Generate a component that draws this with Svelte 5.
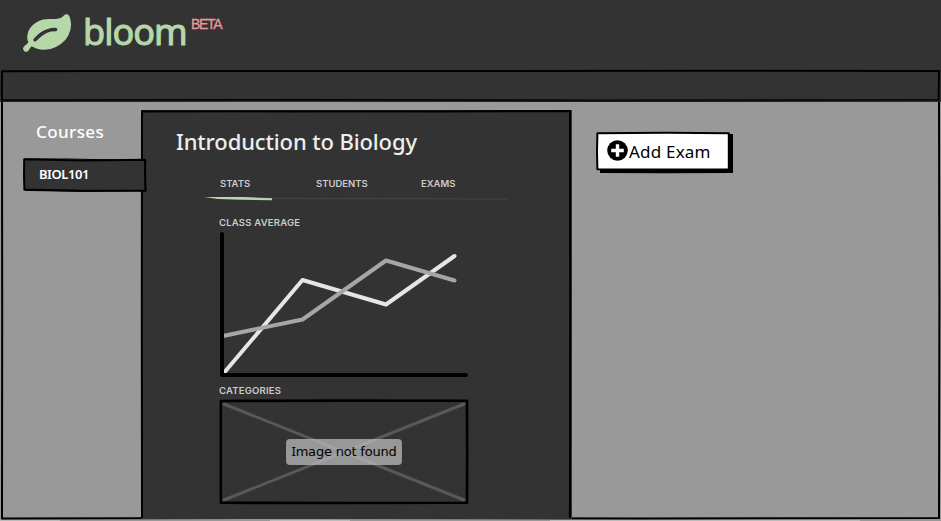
<script>
  const tabs = [
    { label: 'STATS', width: 96 },
    { label: 'STUDENTS', width: 105 },
    { label: 'EXAMS', width: 60 }
  ];
</script>

<div class="app">
  <header>
    <svg class="leaf" viewBox="0 128 1792 1408" aria-hidden="true"><path d="M1280 704q0-26-19-45t-45-19q-172 0-318 49.5t-259.5 134-235.5 219.5q-19 21-19 45 0 26 19 45t45 19q24 0 45-19 27-24 74-71t67-66q137-124 268.5-176t313.5-52q26 0 45-19t19-45zm512-198q0 95-20 193-46 224-184.5 383t-357.5 268q-214 108-438 108-148 0-286-47-15-5-88-42t-96-37q-16 0-39.5 32t-45 70-52.5 70-60 32q-43 0-63.5-17.5t-45.5-59.5q-2-4-6-11t-5.5-10-3-9.5-1.5-13.5q0-35 31-73.5t68-65.5 68-56 31-48q0-4-14-38t-16-44q-9-51-9-104 0-115 43.5-220t119-184.5 170.5-139 204-95.5q55-18 145-25.5t179.5-9 178.5-6 163.5-24 113.5-56.5l29.5-29.5 29.5-28 27-20 36.5-16 43.5-4.5q39 0 70.5 46t47.5 112 24 124 8 96z" /></svg>
    <span class="brand">bloom</span>
    <span class="beta">BETA</span>
  </header>

  <div class="strip">
    <svg class="ink" viewBox="0 0 941 32" preserveAspectRatio="none" aria-hidden="true">
      <path d="M2 1.2L110 1L400 1L700 .8L939 1L938.6 30L600 30.4L300 30L2 30.2L1.8 20Z" />
      <path class="faint" d="M0 31L250 30.6L560 31L941 30.6" />
    </svg>
  </div>

  <div class="workspace">
    <svg class="ink" viewBox="0 0 941 419" preserveAspectRatio="none" aria-hidden="true">
      <path d="M2 0L2.2 210L2 416.4L300 416L640 416.4L939 416L939.4 200L939 0" />
      <path class="lit" d="M0 418.5L60 418.5M270 418.5L350 418.5M550 418.5L860 418.5" />
    </svg>

    <aside>
      <h2>Courses</h2>
      <button class="course">
        <svg class="ink" viewBox="0 0 124 35" preserveAspectRatio="none" aria-hidden="true">
          <path class="fill" d="M1.2 1.2L60 2.4L122 1.8L122.4 32.4L60 32.8L1.4 31.6L1 18Z" />
          <path class="thin" d="M2 1L45 1L123 2.6L121.6 17L123 33L60 33.4L2 32.4" />
        </svg>
        <span>BIOL101</span>
      </button>
    </aside>

    <main>
      <svg class="ink" viewBox="0 0 431 409" preserveAspectRatio="none" aria-hidden="true">
        <path d="M1 408L.8 200L1 1.6L140 1.2L300 1.4L429 1.2L429.2 200L429 408" />
        <path class="thin" d="M1 1L150 1.8L429 .6L429.6 180L428.4 407" />
      </svg>
      <h1>Introduction to Biology</h1>
      <nav>
        {#each tabs as tab}
          <button style="width: {tab.width}px">{tab.label}</button>
        {/each}
      </nav>
      <svg class="rule" width="304" height="6" viewBox="0 0 304 6" aria-hidden="true">
        <path d="M58 .4L220 .8L304 1.6V2.8L190 2.4L65 2.2Z" fill="#404040" />
        <path d="M0 0L40 0L68 1.2V3.2L36 2.8L14 2Z" fill="#b6d7a8" />
      </svg>

      <h3 class="average">CLASS AVERAGE</h3>
      <svg class="chart" width="250" height="148" viewBox="0 0 250 148" aria-hidden="true">
        <path d="M4 143L83.5 49L167 73.5L235.5 25" stroke="#e6e6e6" />
        <path d="M4 105L83.5 88.5L167 29.5L235.5 49.5" stroke="#a6a6a6" />
        <path d="M3 3V144H247" stroke="#000" />
      </svg>

      <h3 class="categories">CATEGORIES</h3>
      <div class="missing">
        <svg class="ink" viewBox="0 0 250 106" preserveAspectRatio="none" aria-hidden="true">
          <path class="cross" d="M5 5L245 101M245 5L5 101" />
          <path class="frame" d="M1.8 2L125 1.6L248 1.8L248.2 55L248 103.8L120 104L1.8 103.8Z" />
        </svg>
        <span class="note"><span class="cap">I</span>mage not found</span>
      </div>
    </main>

    <section>
      <button class="add">
        <svg class="ink" viewBox="0 0 138 42" preserveAspectRatio="none" aria-hidden="true">
          <path class="shadow" d="M4 4L137 2L137 41L70 41.3L4 41Z" />
          <path class="paper" d="M1.4 1.2L70 .8L132.8 1.2L132.8 37.4L70 37.6L1.4 37.2L1 20Z" />
        </svg>
        <svg class="plus" viewBox="0 0 21 21" aria-hidden="true">
          <circle cx="10.5" cy="10.5" r="10.3" />
          <path d="M10.5 4.2V16.8M4.2 10.5H16.8" />
        </svg>
        <span>Add Exam</span>
      </button>
    </section>
  </div>
</div>

<style>
  :global(body) { background: #333; }
  .app {
    width: 941px;
    height: 521px;
    overflow: hidden;
    display: flex;
    flex-direction: column;
    background: #333;
    font-family: "Noto Sans", sans-serif;
    color: #eee;
  }
  h1, h2, h3 { margin: 0; font-weight: 500; white-space: nowrap; }
  button {
    border: 0;
    padding: 0;
    background: none;
    font: inherit;
    color: inherit;
    text-align: left;
    white-space: nowrap;
  }
  svg { display: block; flex: none; }
  .ink {
    position: absolute;
    inset: 0;
    width: 100%;
    height: 100%;
    overflow: visible;
    fill: none;
    stroke: #000;
    stroke-width: 2;
    stroke-linejoin: round;
    pointer-events: none;
  }
  .faint { stroke: #191919; stroke-width: 1; }
  .lit { stroke: #bbb; stroke-width: 1; }
  .thin { stroke-width: 1; }

  header {
    height: 70px;
    flex: none;
    box-sizing: border-box;
    padding: 14px 0 0 23px;
    display: flex;
    align-items: flex-start;
  }
  .leaf { width: 48px; height: 38px; fill: #b6d7a8; }
  .brand {
    margin: -5px 0 0 12px;
    width: 108px;
    font: 400 36px/46px "Noto Sans", sans-serif;
    letter-spacing: -1px;
    color: #b6d7a8;
    -webkit-text-stroke: 1px #b6d7a8;
  }
  .beta { margin-top: 1px; font: 14px/18px "Liberation Sans", sans-serif; letter-spacing: -1.3px; color: #ea9999; -webkit-text-stroke: 0.3px #ea9999; }

  .strip { position: relative; z-index: 1; height: 32px; flex: none; }
  .workspace {
    position: relative;
    flex: 1;
    display: flex;
    background: #999;
  }
  aside { width: 141px; flex: none; padding-top: 18px; box-sizing: border-box; }
  h2 { padding-left: 36px; font-size: 17px; line-height: 24px; letter-spacing: 0.4px; color: #fff; }
  .course {
    position: relative;
    z-index: 2;
    display: flex;
    align-items: center;
    width: 124px;
    height: 35px;
    margin: 14px 0 0 23px;
    padding-left: 16px;
    box-sizing: border-box;
    font-size: 13px;
    font-weight: 600;
    letter-spacing: -0.45px;
    color: #fff;
  }
  .course span, .add span { position: relative; }
  .course span { top: -2px; }
  .fill { fill: #333; }

  main {
    position: relative;
    width: 431px;
    height: 409px;
    flex: none;
    margin-top: 8px;
    padding: 15px 0 0 35px;
    box-sizing: border-box;
    background: #333;
  }
  h1 { font-size: 22px; line-height: 32px; letter-spacing: -0.13px; color: #eee; }
  nav { display: flex; padding: 20px 0 0 44px; color: #ccc; }
  nav button, h3 { font: 600 9.5px/14px Inter, sans-serif; }
  .rule { margin: 6px 0 0 28px; }
  h3 { padding-left: 43px; letter-spacing: 0.22px; color: #ccc; }
  .average { margin-top: 13px; }
  .chart { margin: 1px 0 0 43px; fill: none; stroke-width: 4; stroke-linejoin: round; stroke-linecap: round; }
  .categories { margin-top: 5px; }
  .missing {
    position: relative;
    width: 250px;
    height: 106px;
    margin: 1px 0 0 43px;
    display: flex;
    align-items: center;
    justify-content: center;
  }
  .frame { stroke-width: 2.6; }
  .cross { stroke: #595959; stroke-width: 3; stroke-linecap: round; }
  .note {
    position: relative;
    width: 116px;
    height: 26px;
    border-radius: 4px;
    background: rgba(191, 191, 191, 0.72);
    color: #000;
    font: 13px/25px "DejaVu Sans", sans-serif;
    letter-spacing: -0.2px;
    text-align: center;
    white-space: nowrap;
  }
  .cap { font-family: "Noto Sans", sans-serif; }

  section { flex: 1; padding: 30px 0 0 24px; }
  .add {
    position: relative;
    display: flex;
    align-items: center;
    width: 138px;
    height: 42px;
    padding: 0 0 5px 11px;
    box-sizing: border-box;
    color: #000;
    font-size: 17px;
    letter-spacing: 0.2px;
  }
  .add span { left: 1px; top: 1px; }
  .shadow { fill: #000; stroke: none; }
  .paper { fill: #fff; }
  .plus { position: relative; width: 21px; height: 21px; }
  .plus path { stroke: #fff; stroke-width: 3.4; fill: none; }
</style>
